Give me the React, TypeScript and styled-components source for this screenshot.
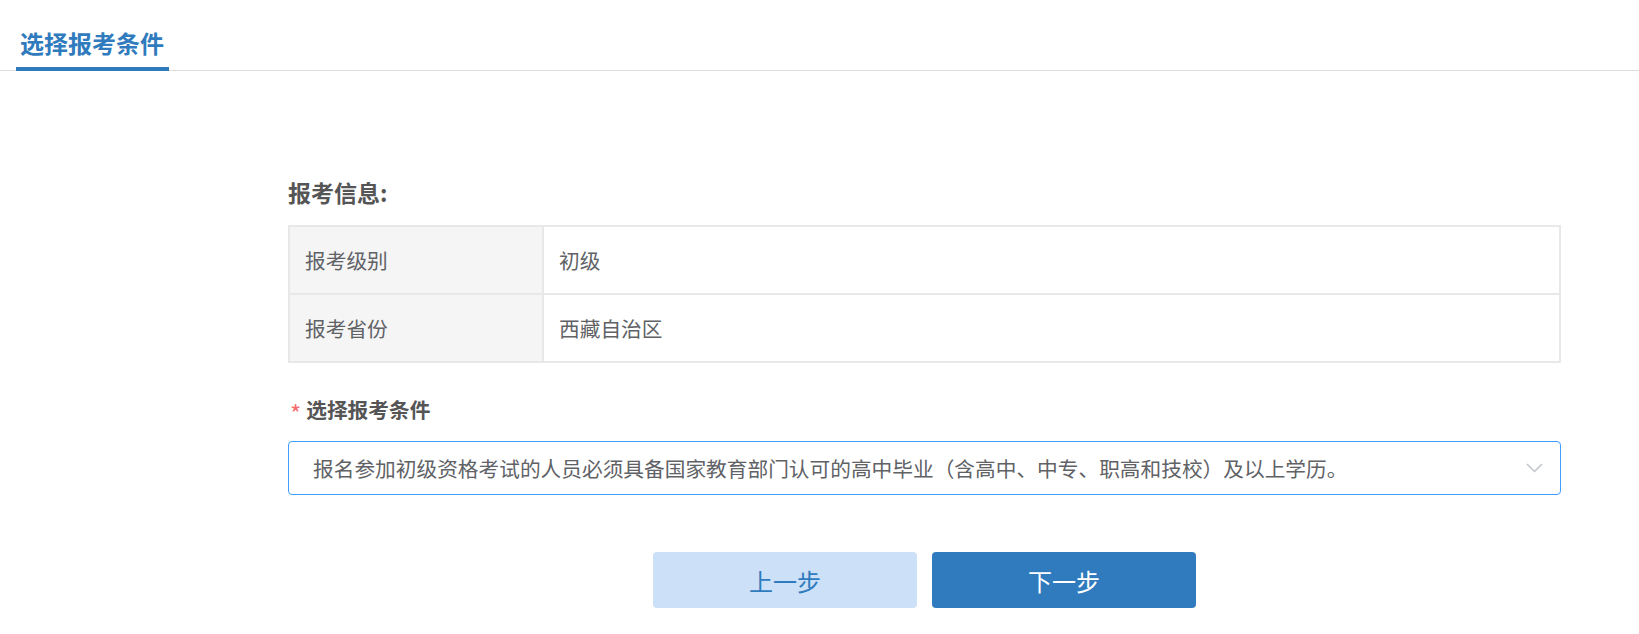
import styled, { createGlobalStyle } from 'styled-components';

const GlobalStyle = createGlobalStyle`
  body {
    margin: 0;
    background: #fff;
    font-family: "Noto Sans CJK SC", "Noto Sans", sans-serif;
  }
`;

const TabBar = styled.div`
  display: flex;
  height: 70px;
  border-bottom: 1px solid #dcdcdc;
`;

const Tab = styled.div`
  box-sizing: border-box;
  margin-left: 16px;
  margin-bottom: -1px;
  width: 153px;
  height: 71px;
  padding: 18px 0 0 4px;
  border-bottom: 4px solid #2f7bbd;
  display: flex;
  align-items: center;
  color: #2f7bbd;
  font-size: 24px;
  font-weight: 700;
`;

const Content = styled.div`
  padding: 106px 78px 0 288px;
`;

const SectionTitle = styled.div`
  font-size: 23px;
  font-weight: 700;
  line-height: 30px;
  color: #555;
`;

const InfoTable = styled.table`
  width: 100%;
  margin-top: 18px;
  border-collapse: collapse;
  border: 2px solid #e8e8e8;
`;

const Cell = styled.td<{ $head?: boolean }>`
  box-sizing: border-box;
  height: 68px;
  padding: 0 0 0 15px;
  border: 2px solid #e8e8e8;
  background: ${(p) => (p.$head ? '#f5f5f5' : '#fff')};
  width: ${(p) => (p.$head ? '254px' : 'auto')};
  color: #606266;
  font-size: 20.7px;
`;

const FieldLabel = styled.div`
  margin-top: 31px;
  height: 30px;
  display: flex;
  align-items: center;
  line-height: 30px;
  font-size: 20.7px;
  font-weight: 700;
  color: #555;
`;

const Star = styled.span`
  color: #f56c6c;
  font-weight: 400;
  font-size: 24px;
  line-height: 1;
  margin: 8px 5px 0 2px;
`;

const Select = styled.div`
  box-sizing: border-box;
  margin-top: 17px;
  height: 54px;
  border: 1px solid #409eff;
  border-radius: 4px;
  padding: 0 17px 0 24px;
  display: flex;
  align-items: center;
  justify-content: space-between;
  color: #606266;
  font-size: 20.7px;
`;

const Actions = styled.div`
  margin-top: 57px;
  display: flex;
  justify-content: center;
  gap: 15px;
`;

const Button = styled.button<{ $primary?: boolean }>`
  width: 264px;
  height: 56px;
  border: none;
  border-radius: 4px;
  font-family: inherit;
  font-size: 24px;
  background: ${(p) => (p.$primary ? '#2f7bbd' : '#cce0f8')};
  color: ${(p) => (p.$primary ? '#fff' : '#2f7bbd')};
  cursor: pointer;
`;

const rows = [
  ['报考级别', '初级'],
  ['报考省份', '西藏自治区'],
];

export default function App() {
  return (
    <>
      <GlobalStyle />
      <TabBar>
        <Tab>选择报考条件</Tab>
      </TabBar>
      <Content>
        <SectionTitle>报考信息:</SectionTitle>
        <InfoTable>
          <tbody>
            {rows.map(([k, v]) => (
              <tr key={k}>
                <Cell $head>{k}</Cell>
                <Cell>{v}</Cell>
              </tr>
            ))}
          </tbody>
        </InfoTable>
        <FieldLabel>
          <Star>*</Star>选择报考条件
        </FieldLabel>
        <Select>
          <span>报名参加初级资格考试的人员必须具备国家教育部门认可的高中毕业（含高中、中专、职高和技校）及以上学历。</span>
          <svg width="17" height="10" viewBox="0 0 17 10" fill="none">
            <path d="M1 1l7.5 7.5L16 1" stroke="#c0c4cc" strokeWidth="1.5" />
          </svg>
        </Select>
        <Actions>
          <Button>上一步</Button>
          <Button $primary>下一步</Button>
        </Actions>
      </Content>
    </>
  );
}
